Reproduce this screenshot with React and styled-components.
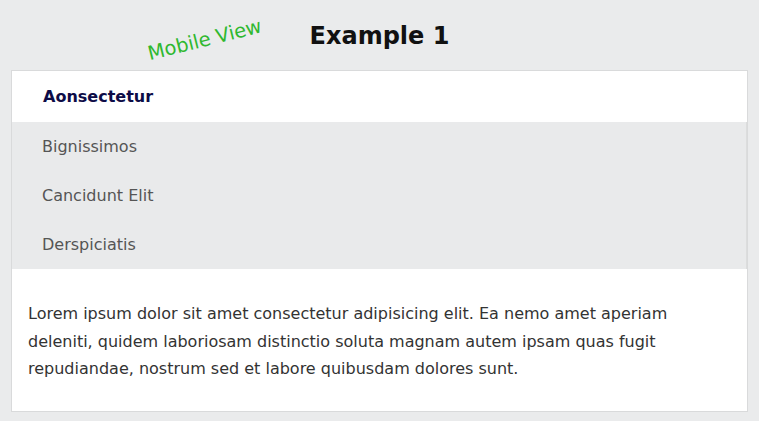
import React from "react";
import styled, { createGlobalStyle } from "styled-components";

const GlobalStyle = createGlobalStyle`
    html, body {
        margin: 0;
        padding: 0;
        background: #eaebec;
        font-family: "DejaVu Sans", Verdana, sans-serif;
    }
`;

const Page = styled.div`
    width: 759px;
    height: 421px;
    box-sizing: border-box;
    padding: 0 11px;
`;

const Header = styled.div`
    position: relative;
    height: 70px;
    display: flex;
    align-items: center;
    justify-content: center;
`;

const Title = styled.h1`
    margin: 2px 0 0 0;
    font-size: 24px;
    font-weight: bold;
    color: #111;
`;

// 초록색 라벨은 제목 위에 떠 있음
const Badge = styled.span`
    position: absolute;
    left: 140px;
    top: 42px;
    color: #2fb82f;
    font-size: 19.5px;
    transform: rotate(-14deg);
    transform-origin: left bottom;
    white-space: nowrap;
`;

const Card = styled.div`
    background: #fff;
    border: 1px solid #d9dadb;
    display: flex;
    flex-direction: column;
`;

const Tab = styled.div`
    height: ${(p) => (p.active ? "51px" : "49px")};
    display: flex;
    align-items: center;
    padding-left: ${(p) => (p.active ? "31px" : "30px")};
    font-size: 16px;
    font-weight: ${(p) => (p.active ? "bold" : "normal")};
    color: ${(p) => (p.active ? "#0d0c47" : "#555")};
    background: ${(p) => (p.active ? "#fff" : "transparent")};
`;

const TabList = styled.div`
    background: #e9eaeb;
    border-right: 1px solid #dcdddd;
    display: flex;
    flex-direction: column;
`;

const Text = styled.p`
    margin: 0;
    padding: 31px 16px 28px;
    font-size: 16px;
    line-height: 27.5px;
    color: #333;
`;

const tabs = ["Bignissimos", "Cancidunt Elit", "Derspiciatis"];

export default function App() {
    return (
        <Page>
            <GlobalStyle />
            <Header>
                <Badge>Mobile View</Badge>
                <Title>Example 1</Title>
            </Header>
            <Card>
                <Tab active>Aonsectetur</Tab>
                <TabList>
                    {tabs.map((t) => (
                        <Tab key={t}>{t}</Tab>
                    ))}
                </TabList>
                <Text>
                    Lorem ipsum dolor sit amet consectetur adipisicing elit. Ea nemo amet aperiam deleniti,
                    quidem laboriosam distinctio soluta magnam autem ipsam quas fugit repudiandae, nostrum
                    sed et labore quibusdam dolores sunt.
                </Text>
            </Card>
        </Page>
    );
}
